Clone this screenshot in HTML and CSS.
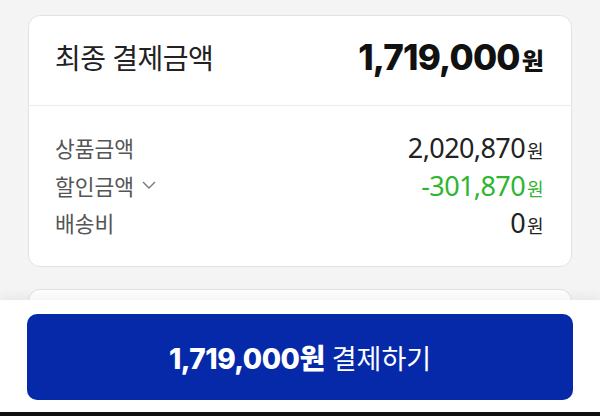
FILE: index.html
```html
<!DOCTYPE html>
<html lang="ko">
<head>
    <meta charset="UTF-8">
    <meta name="viewport" content="width=device-width, initial-scale=1.0">
    <title>주문결제</title>
    <link rel="stylesheet" href="styles.css">
</head>
<body>

    <div id="checkout">
        <div class="card">
            <div class="total-row">
                <span class="total-label">최종 결제금액</span>
                <span class="total-price">1,719,000<small>원</small></span>
            </div>
            <div class="detail-list">
                <div class="detail-row">
                    <span class="detail-label">상품금액</span>
                    <span class="detail-price">2,020,870<small>원</small></span>
                </div>
                <div class="detail-row">
                    <span class="detail-label">할인금액
                        <svg class="chevron" width="14" height="8" viewBox="0 0 14 8">
                            <path d="M1 1l6 6 6-6" fill="none" stroke="#777" stroke-width="1.4"/>
                        </svg>
                    </span>
                    <span class="detail-price discount">-301,870<small>원</small></span>
                </div>
                <div class="detail-row">
                    <span class="detail-label">배송비</span>
                    <span class="detail-price">0<small>원</small></span>
                </div>
            </div>
        </div>

        <div class="card card-next"></div>
    </div>

    <div id="pay-bar">
        <button class="pay-button"><b>1,719,000<small>원</small></b> 결제하기</button>
    </div>

</body>
</html>
```

FILE: styles.css
```css
/* General Styles */
body {
    font-family: 'Noto Sans', 'Noto Sans CJK KR', sans-serif;
    background-color: #f4f4f4;
    margin: 0;
    height: 100vh;
    overflow: hidden;
}

#checkout {
    padding: 15px 28px 0 28px;
}

.card {
    background: #ffffff;
    border: 1px solid #e2e2e2;
    border-radius: 12px;
}

.card-next {
    margin-top: 22px;
    height: 120px;
}

.total-row {
    display: flex;
    justify-content: space-between;
    align-items: center;
    height: 82px;
    padding: 0 28px 7px 26px;
    border-bottom: 1px solid #ececec;
}

.total-label {
    font-size: 28px;
    color: #222;
    letter-spacing: -0.5px;
}

.total-price {
    font-family: 'Inter', 'Noto Sans CJK KR', sans-serif;
    font-size: 35px;
    font-weight: 800;
    color: #111;
    letter-spacing: -0.8px;
}

.total-price small {
    font-family: 'Noto Sans CJK KR', sans-serif;
    font-size: 24px;
    margin-left: 2px;
}

.detail-list {
    padding: 23px 28px 24px 26px;
}

.detail-row {
    display: flex;
    justify-content: space-between;
    align-items: center;
    height: 37.5px;
}

.detail-label {
    font-size: 21.5px;
    color: #555;
    display: flex;
    align-items: center;
}

.chevron {
    margin-left: 8px;
}

.detail-price {
    font-size: 27px;
    color: #222;
    letter-spacing: -0.6px;
}

.detail-price small {
    font-size: 18px;
    margin-left: 2px;
}

.discount {
    color: #2fb52f;
}

/* bottom pay bar */
#pay-bar {
    position: fixed;
    left: 0;
    right: 0;
    bottom: 0;
    background: #ffffff;
    padding: 14px 27px 12px 27px;
    border-bottom: 4px solid #111;
    box-shadow: 0 -4px 10px rgba(0, 0, 0, 0.05);
}

.pay-button {
    display: block;
    width: 100%;
    height: 86px;
    border: none;
    border-radius: 10px;
    background: #0529a9;
    color: #fff;
    font-family: 'Noto Sans', 'Noto Sans CJK KR', sans-serif;
    font-size: 27px;
    cursor: pointer;
}

.pay-button b {
    font-family: 'Inter', 'Noto Sans CJK KR', sans-serif;
    font-size: 28px;
    font-weight: 800;
    letter-spacing: -0.5px;
}

.pay-button b small {
    font-family: 'Noto Sans CJK KR', sans-serif;
    font-size: 28px;
}
```
